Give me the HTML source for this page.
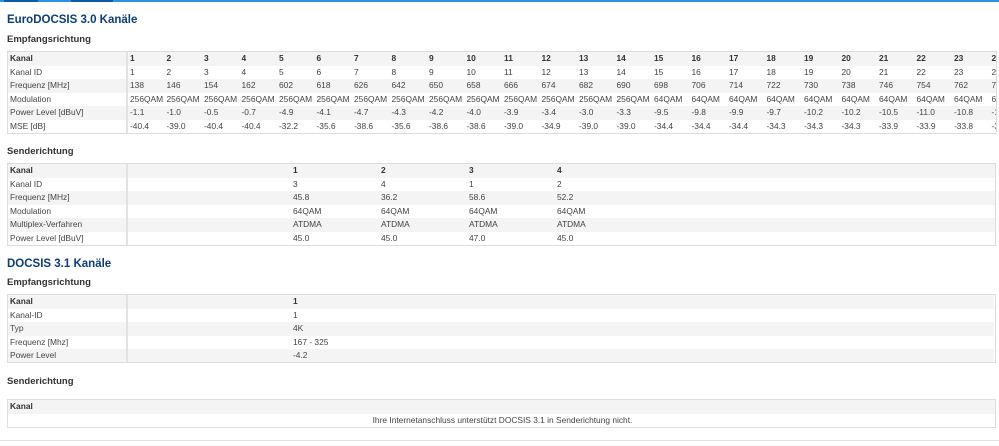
<!DOCTYPE html>
<html><head><meta charset="utf-8"><style>
*{margin:0;padding:0;box-sizing:border-box}
body{width:999px;height:446px;background:#fff;font-family:"Liberation Sans",sans-serif;color:#444;position:relative;overflow:hidden}
.topbar{position:absolute;left:0;top:0;width:999px;height:2px;background:#2b93e6}
.topbar i{position:absolute;top:0;height:2px;background:#0a5aa8}
h1{position:absolute;left:7px;font-size:11.5px;font-weight:bold;color:#0b3d78}
h2{position:absolute;left:7px;font-size:9.5px;font-weight:bold;color:#333}
.wrap{position:absolute;left:7px;overflow:hidden;border:1px solid #ddd}
table{border-collapse:collapse;table-layout:fixed;font-size:8.4px}
td{height:13.6px;padding:0 0 0 2px;white-space:nowrap;overflow:hidden;line-height:13.6px}
tr:nth-child(odd){background:#f4f4f4}
tr:first-child td{font-weight:bold;color:#333}
td.l{border-right:2px solid #e2e2e2}
</style></head><body>
<div class="topbar"><i style="left:4px;width:34px"></i><i style="left:71px;width:42px"></i></div>

<h1 style="top:14px">EuroDOCSIS 3.0 Kanäle</h1>
<h2 style="top:34px">Empfangsrichtung</h2>
<div class="wrap" style="top:51px;width:990px;height:83px">
<table style="width:1019px">
<colgroup><col style="width:119px"><col span="24" style="width:37.5px"></colgroup>
<tr><td class="l">Kanal</td><td>1</td><td>2</td><td>3</td><td>4</td><td>5</td><td>6</td><td>7</td><td>8</td><td>9</td><td>10</td><td>11</td><td>12</td><td>13</td><td>14</td><td>15</td><td>16</td><td>17</td><td>18</td><td>19</td><td>20</td><td>21</td><td>22</td><td>23</td><td>24</td></tr>
<tr><td class="l">Kanal ID</td><td>1</td><td>2</td><td>3</td><td>4</td><td>5</td><td>6</td><td>7</td><td>8</td><td>9</td><td>10</td><td>11</td><td>12</td><td>13</td><td>14</td><td>15</td><td>16</td><td>17</td><td>18</td><td>19</td><td>20</td><td>21</td><td>22</td><td>23</td><td>24</td></tr>
<tr><td class="l">Frequenz [MHz]</td><td>138</td><td>146</td><td>154</td><td>162</td><td>602</td><td>618</td><td>626</td><td>642</td><td>650</td><td>658</td><td>666</td><td>674</td><td>682</td><td>690</td><td>698</td><td>706</td><td>714</td><td>722</td><td>730</td><td>738</td><td>746</td><td>754</td><td>762</td><td>770</td></tr>
<tr><td class="l">Modulation</td><td>256QAM</td><td>256QAM</td><td>256QAM</td><td>256QAM</td><td>256QAM</td><td>256QAM</td><td>256QAM</td><td>256QAM</td><td>256QAM</td><td>256QAM</td><td>256QAM</td><td>256QAM</td><td>256QAM</td><td>256QAM</td><td>64QAM</td><td>64QAM</td><td>64QAM</td><td>64QAM</td><td>64QAM</td><td>64QAM</td><td>64QAM</td><td>64QAM</td><td>64QAM</td><td>64QAM</td></tr>
<tr><td class="l">Power Level [dBuV]</td><td>-1.1</td><td>-1.0</td><td>-0.5</td><td>-0.7</td><td>-4.9</td><td>-4.1</td><td>-4.7</td><td>-4.3</td><td>-4.2</td><td>-4.0</td><td>-3.9</td><td>-3.4</td><td>-3.0</td><td>-3.3</td><td>-9.5</td><td>-9.8</td><td>-9.9</td><td>-9.7</td><td>-10.2</td><td>-10.2</td><td>-10.5</td><td>-11.0</td><td>-10.8</td><td>-10.9</td></tr>
<tr><td class="l">MSE [dB]</td><td>-40.4</td><td>-39.0</td><td>-40.4</td><td>-40.4</td><td>-32.2</td><td>-35.6</td><td>-38.6</td><td>-35.6</td><td>-38.6</td><td>-38.6</td><td>-39.0</td><td>-34.9</td><td>-39.0</td><td>-39.0</td><td>-34.4</td><td>-34.4</td><td>-34.4</td><td>-34.3</td><td>-34.3</td><td>-34.3</td><td>-33.9</td><td>-33.9</td><td>-33.8</td><td>-33.8</td></tr>
</table></div>

<h2 style="top:146px">Senderichtung</h2>
<div class="wrap" style="top:163px;width:989px;height:83px">
<table style="width:987px">
<colgroup><col style="width:119px"><col style="width:164px"><col style="width:88px"><col style="width:88px"><col style="width:88px"><col></colgroup>
<tr><td class="l">Kanal</td><td></td><td>1</td><td>2</td><td>3</td><td>4</td></tr>
<tr><td class="l">Kanal ID</td><td></td><td>3</td><td>4</td><td>1</td><td>2</td></tr>
<tr><td class="l">Frequenz [MHz]</td><td></td><td>45.8</td><td>36.2</td><td>58.6</td><td>52.2</td></tr>
<tr><td class="l">Modulation</td><td></td><td>64QAM</td><td>64QAM</td><td>64QAM</td><td>64QAM</td></tr>
<tr><td class="l">Multiplex-Verfahren</td><td></td><td>ATDMA</td><td>ATDMA</td><td>ATDMA</td><td>ATDMA</td></tr>
<tr><td class="l">Power Level [dBuV]</td><td></td><td>45.0</td><td>45.0</td><td>47.0</td><td>45.0</td></tr>
</table></div>

<h1 style="top:258px">DOCSIS 3.1 Kanäle</h1>
<h2 style="top:277px">Empfangsrichtung</h2>
<div class="wrap" style="top:294px;width:989px;height:69px">
<table style="width:987px">
<colgroup><col style="width:119px"><col style="width:164px"><col></colgroup>
<tr><td class="l">Kanal</td><td></td><td>1</td></tr>
<tr><td class="l">Kanal-ID</td><td></td><td>1</td></tr>
<tr><td class="l">Typ</td><td></td><td>4K</td></tr>
<tr><td class="l">Frequenz [Mhz]</td><td></td><td>167 - 325</td></tr>
<tr><td class="l">Power Level</td><td></td><td>-4.2</td></tr>
</table></div>

<h2 style="top:376px">Senderichtung</h2>
<div class="wrap" style="top:399px;width:989px;height:29px">
<table style="width:987px">
<tr><td>Kanal</td></tr>
<tr><td style="text-align:center">Ihre Internetanschluss unterstützt DOCSIS 3.1 in Senderichtung nicht.</td></tr>
</table></div>
<div style="position:absolute;left:0;top:440px;width:999px;height:1px;background:#e2e2e2"></div>
</body></html>
